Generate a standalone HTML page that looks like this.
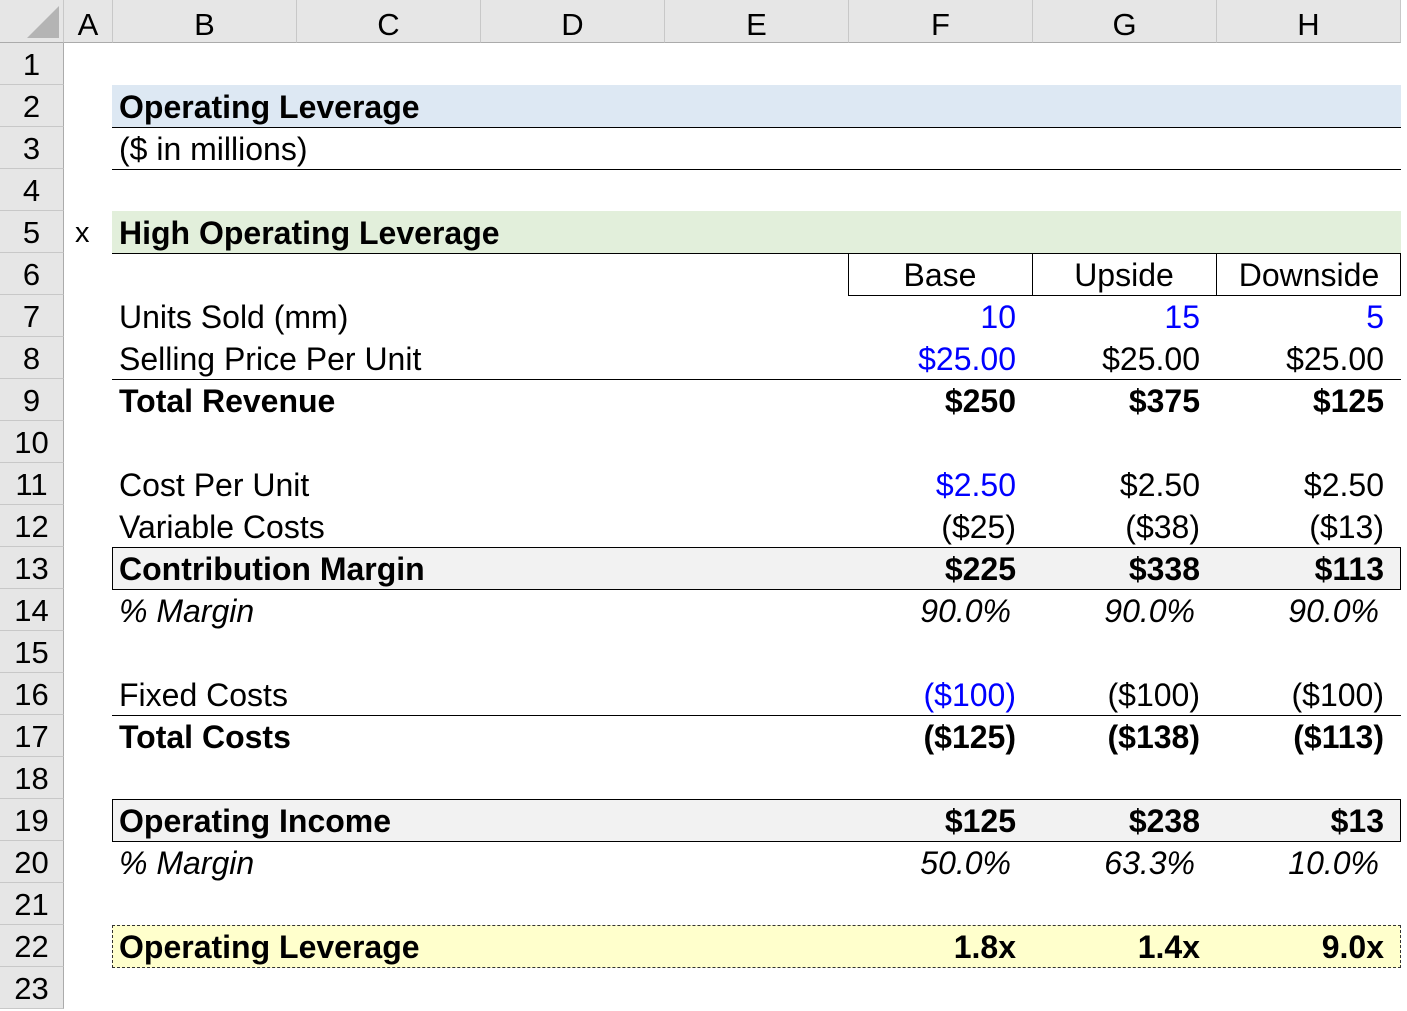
<!DOCTYPE html><html><head><style>
body{margin:0;width:1407px;height:973px;overflow:hidden;background:#fff;font-family:"Liberation Sans",Arial,sans-serif;position:relative}
.ch{position:absolute;top:0;height:43px;background:#e6e6e6;border-right:1px solid #c8c8c8;border-bottom:1px solid #ababab;font-size:31px;text-align:center;line-height:50px;box-sizing:border-box}
.rh{position:absolute;left:0;width:64px;height:42px;background:#e6e6e6;border-right:1px solid #ababab;border-bottom:1px solid #c8c8c8;font-size:31px;text-align:center;line-height:44px;box-sizing:border-box}
.t{position:absolute;font-size:32px;line-height:42px;height:42px;white-space:nowrap}
.r{text-align:right;width:184px}
.b{font-weight:bold}.i{font-style:italic}.bl{color:#0000ff}
.bx{position:absolute;box-sizing:border-box}
</style></head><body>
<div class="ch" style="left:0;width:64px"><div style="position:absolute;right:4px;bottom:4px;width:0;height:0;border-left:32px solid transparent;border-bottom:32px solid #b4b4b4"></div></div>
<div class="ch" style="left:64px;width:49px">A</div>
<div class="ch" style="left:113px;width:184px">B</div>
<div class="ch" style="left:297px;width:184px">C</div>
<div class="ch" style="left:481px;width:184px">D</div>
<div class="ch" style="left:665px;width:184px">E</div>
<div class="ch" style="left:849px;width:184px">F</div>
<div class="ch" style="left:1033px;width:184px">G</div>
<div class="ch" style="left:1217px;width:184px">H</div>

<div class="rh" style="top:43px">1</div><div class="rh" style="top:85px">2</div><div class="rh" style="top:127px">3</div><div class="rh" style="top:169px">4</div><div class="rh" style="top:211px">5</div><div class="rh" style="top:253px">6</div><div class="rh" style="top:295px">7</div><div class="rh" style="top:337px">8</div><div class="rh" style="top:379px">9</div><div class="rh" style="top:421px">10</div><div class="rh" style="top:463px">11</div><div class="rh" style="top:505px">12</div><div class="rh" style="top:547px">13</div><div class="rh" style="top:589px">14</div><div class="rh" style="top:631px">15</div><div class="rh" style="top:673px">16</div><div class="rh" style="top:715px">17</div><div class="rh" style="top:757px">18</div><div class="rh" style="top:799px">19</div><div class="rh" style="top:841px">20</div><div class="rh" style="top:883px">21</div><div class="rh" style="top:925px">22</div><div class="rh" style="top:967px">23</div>

<div class="bx" style="left:112px;top:85px;width:1289px;height:43px;background:#dde8f3;border-bottom:1px solid #000"></div>
<div class="bx" style="left:112px;top:169px;width:1289px;height:1px;background:#000"></div>
<div class="bx" style="left:112px;top:211px;width:1289px;height:43px;background:#e2efdb;border-bottom:1px solid #000"></div>
<div class="bx" style="left:848px;top:253px;width:553px;height:43px;border:1px solid #000;border-top:none"></div>
<div class="bx" style="left:1032px;top:253px;width:1px;height:43px;background:#000"></div>
<div class="bx" style="left:1216px;top:253px;width:1px;height:43px;background:#000"></div>
<div class="bx" style="left:112px;top:379px;width:1289px;height:1px;background:#000"></div>
<div class="bx" style="left:112px;top:547px;width:1289px;height:43px;background:#f2f2f2;border:1px solid #000"></div>
<div class="bx" style="left:112px;top:715px;width:1289px;height:1px;background:#000"></div>
<div class="bx" style="left:112px;top:799px;width:1289px;height:43px;background:#f2f2f2;border:1px solid #000"></div>
<div class="bx" style="left:112px;top:925px;width:1289px;height:43px;background:#ffffcc;border:1px dashed #333"></div>

<div class="t b" style="left:119px;top:86px">Operating Leverage</div>
<div class="t" style="left:119px;top:128px">($ in millions)</div>
<div class="t" style="left:75px;top:212px;font-size:29px">x</div>
<div class="t b" style="left:119px;top:212px">High Operating Leverage</div>
<div class="t" style="left:848px;top:254px;width:184px;text-align:center">Base</div>
<div class="t" style="left:1032px;top:254px;width:184px;text-align:center">Upside</div>
<div class="t" style="left:1216px;top:254px;width:186px;text-align:center">Downside</div>

<div class="t" style="left:119px;top:296px">Units Sold (mm)</div>
<div class="t r bl" style="left:832px;top:296px">10</div><div class="t r bl" style="left:1016px;top:296px">15</div><div class="t r bl" style="left:1200px;top:296px">5</div>
<div class="t" style="left:119px;top:338px">Selling Price Per Unit</div>
<div class="t r bl" style="left:832px;top:338px">$25.00</div><div class="t r" style="left:1016px;top:338px">$25.00</div><div class="t r" style="left:1200px;top:338px">$25.00</div>
<div class="t b" style="left:119px;top:380px">Total Revenue</div>
<div class="t r b" style="left:832px;top:380px">$250</div><div class="t r b" style="left:1016px;top:380px">$375</div><div class="t r b" style="left:1200px;top:380px">$125</div>

<div class="t" style="left:119px;top:464px">Cost Per Unit</div>
<div class="t r bl" style="left:832px;top:464px">$2.50</div><div class="t r" style="left:1016px;top:464px">$2.50</div><div class="t r" style="left:1200px;top:464px">$2.50</div>
<div class="t" style="left:119px;top:506px">Variable Costs</div>
<div class="t r" style="left:832px;top:506px">($25)</div><div class="t r" style="left:1016px;top:506px">($38)</div><div class="t r" style="left:1200px;top:506px">($13)</div>
<div class="t b" style="left:119px;top:548px">Contribution Margin</div>
<div class="t r b" style="left:832px;top:548px">$225</div><div class="t r b" style="left:1016px;top:548px">$338</div><div class="t r b" style="left:1200px;top:548px">$113</div>
<div class="t i" style="left:119px;top:590px">% Margin</div>
<div class="t r i" style="left:827px;top:590px">90.0%</div><div class="t r i" style="left:1011px;top:590px">90.0%</div><div class="t r i" style="left:1195px;top:590px">90.0%</div>

<div class="t" style="left:119px;top:674px">Fixed Costs</div>
<div class="t r bl" style="left:832px;top:674px">($100)</div><div class="t r" style="left:1016px;top:674px">($100)</div><div class="t r" style="left:1200px;top:674px">($100)</div>
<div class="t b" style="left:119px;top:716px">Total Costs</div>
<div class="t r b" style="left:832px;top:716px">($125)</div><div class="t r b" style="left:1016px;top:716px">($138)</div><div class="t r b" style="left:1200px;top:716px">($113)</div>

<div class="t b" style="left:119px;top:800px">Operating Income</div>
<div class="t r b" style="left:832px;top:800px">$125</div><div class="t r b" style="left:1016px;top:800px">$238</div><div class="t r b" style="left:1200px;top:800px">$13</div>
<div class="t i" style="left:119px;top:842px">% Margin</div>
<div class="t r i" style="left:827px;top:842px">50.0%</div><div class="t r i" style="left:1011px;top:842px">63.3%</div><div class="t r i" style="left:1195px;top:842px">10.0%</div>

<div class="t b" style="left:119px;top:926px">Operating Leverage</div>
<div class="t r b" style="left:832px;top:926px">1.8x</div><div class="t r b" style="left:1016px;top:926px">1.4x</div><div class="t r b" style="left:1200px;top:926px">9.0x</div>
</body></html>
